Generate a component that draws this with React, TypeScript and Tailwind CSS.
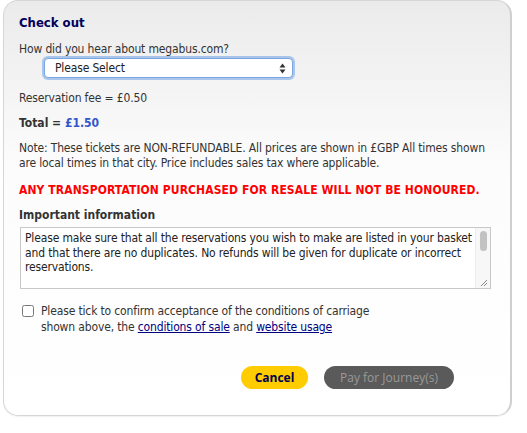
import { useState } from 'react';

export default function App() {
  const [agreed, setAgreed] = useState(false);

  return (
    <div className="w-[527px] h-[433px] bg-white pl-[3px] pr-[15px] font-['DejaVu_Sans_Condensed','DejaVu_Sans',sans-serif] text-[12px] tracking-[-0.15px] text-[#333]">
      <div className="h-[416px] rounded-[15px] border border-[#d6d6d6] border-r-2 border-r-[#cfcfcf] shadow-[0_1px_1px_rgba(0,0,0,0.06)] bg-gradient-to-b from-[#ebebeb] via-[#fcfcfc] via-40% to-white px-[15px] pt-[14px]">
        <h2 className="text-[13px] font-bold text-[#00005c] leading-[16px] tracking-normal">Check out</h2>

        {/* hear about */}
        <div className="mt-[11px] leading-[14px]">How did you hear about megabus.com?</div>
        <div className="pl-[25px] mt-[2px]">
          <div className="w-[249px] h-[20px] rounded-[4px] border border-[#7aa7e0] bg-white shadow-[0_0_0_2px_rgba(110,160,230,0.55)] flex items-center justify-between pl-[10px] pr-[6px] text-[12px] text-[#222]">
            <span>Please Select</span>
            <svg width="7" height="11" viewBox="0 0 7 11">
              <path d="M3.5 0.5 L6.5 4.5 H0.5 Z" fill="#333" />
              <path d="M3.5 10.5 L6.5 6.5 H0.5 Z" fill="#333" />
            </svg>
          </div>
        </div>

        <div className="mt-[13px] leading-[14px]">Reservation fee = £0.50</div>
        <div className="mt-[11px] leading-[14px] font-bold tracking-normal">
          Total = <span className="text-[#3355cc]">£1.50</span>
        </div>

        <p className="mt-[11px] leading-[15px] whitespace-nowrap">
          Note: These tickets are NON-REFUNDABLE. All prices are shown in £GBP All times shown
          <br />
          are local times in that city. Price includes sales tax where applicable.
        </p>

        <p className="mt-[12px] leading-[14px] font-bold tracking-[0.1px] text-[#ff0000] whitespace-nowrap">
          ANY TRANSPORTATION PURCHASED FOR RESALE WILL NOT BE HONOURED.
        </p>

        <h3 className="mt-[11px] leading-[14px] font-bold tracking-normal">Important information</h3>

        {/* textarea look */}
        <div className="mt-[5px] ml-[1px] w-[471px] h-[62px] border border-[#c8c8c8] bg-white flex">
          <div className="flex-1 min-w-0 overflow-hidden pl-[4px] pt-[3px] leading-[14.5px] text-[#222] whitespace-nowrap">
            Please make sure that all the reservations you wish to make are listed in your basket
            <br />
            and that there are no duplicates. No refunds will be given for duplicate or incorrect
            <br />
            reservations.
          </div>
          <div className="w-[15px] shrink-0 border-l border-[#ececec] bg-[#f7f7f7] flex flex-col items-center justify-between pt-[3px] pb-[1px]">
            <div className="w-[7px] h-[20px] rounded-full bg-[#c2c2c2]" />
            <svg width="9" height="9" viewBox="0 0 9 9">
              <path d="M8 2 L2 8 M8 5 L5 8" stroke="#888" strokeWidth="1" />
            </svg>
          </div>
        </div>

        {/* agree */}
        <div className="mt-[14px] flex items-start gap-[7px] pl-[3px]">
          <input
            type="checkbox"
            checked={agreed}
            onChange={() => setAgreed(!agreed)}
            className="mt-[2px] w-[12px] h-[12px] accent-[#3b82f6]"
          />
          <label className="leading-[16px]">
            Please tick to confirm acceptance of the conditions of carriage
            <br />
            shown above, the{' '}
            <a href="#" className="text-[#000080] underline">conditions of sale</a> and{' '}
            <a href="#" className="text-[#000080] underline">website usage</a>
          </label>
        </div>

        {/* buttons */}
        <div className="mt-[31px] flex justify-end gap-[16px] pr-[41px]">
          <button className="w-[67px] h-[23px] rounded-full bg-[#ffcc00] text-[#000050] font-bold text-[12px] tracking-normal font-['Open_Sans',sans-serif]">
            Cancel
          </button>
          <button className="w-[130px] h-[23px] rounded-full bg-[#5a5a5a] text-[#999] text-[12px] tracking-normal font-['Open_Sans',sans-serif]">
            Pay for Journey(s)
          </button>
        </div>
      </div>
    </div>
  );
}
